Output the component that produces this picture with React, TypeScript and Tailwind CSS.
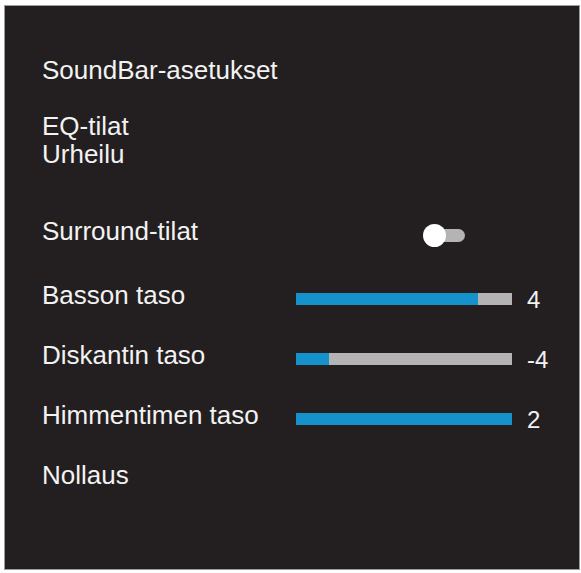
const ROWS = [
  { label: 'Basson taso', fill: 182, value: '4' },
  { label: 'Diskantin taso', fill: 33, value: '-4' },
  { label: 'Himmentimen taso', fill: 216, value: '2' },
];

function LevelRow({ label, fill, value }: { label: string; fill: number; value: string }) {
  return (
    <div className="flex items-center h-[30px]">
      <span className="w-[254px] shrink-0">{label}</span>
      <div className="mt-[8px] flex w-[216px] h-[12px] bg-[#b4b4b4]">
        <div className="h-full bg-[#1591cc]" style={{ width: fill }} />
      </div>
      <span className="ml-[15px] mt-[10px] text-[24px] leading-none">{value}</span>
    </div>
  );
}

export default function App() {
  return (
    <div className="w-[581px] h-[573px] bg-white pt-[5px] pl-[4px]">
      <div
        className="w-[576px] h-[565px] border border-[#9c9c9c] bg-[#231f20] text-[#f2f2f2] text-[26px] leading-[30px] pl-[37px] pt-[49px]"
        style={{ fontFamily: '"Liberation Sans", Arial, sans-serif' }}
      >
        <p>SoundBar-asetukset</p>

        <div className="mt-[27px] leading-[28px]">
          <p>EQ-tilat</p>
          <p>Urheilu</p>
        </div>

        <div className="mt-[48px] flex items-center h-[30px]">
          <span className="w-[381px] shrink-0">Surround-tilat</span>
          <div className="mt-[8px] flex items-center">
            <div className="relative z-10 w-[23px] h-[23px] rounded-full bg-white" />
            <div className="-ml-[6px] w-[25px] h-[13px] rounded-r-full bg-[#b4b4b4]" />
          </div>
        </div>

        <div className="mt-[34px] flex flex-col gap-[30px]">
          {ROWS.map(r => (
            <LevelRow key={r.label} {...r} />
          ))}
        </div>

        <p className="mt-[30px]">Nollaus</p>
      </div>
    </div>
  );
}
